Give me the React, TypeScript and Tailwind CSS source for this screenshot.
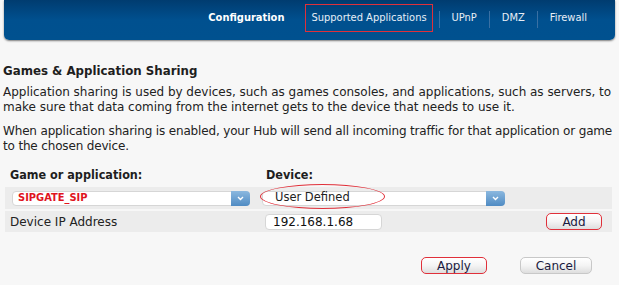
import React from "react";

const cond = { fontFamily: '"DejaVu Sans Condensed", "DejaVu Sans", Tahoma, sans-serif' };
const wide = { fontFamily: '"DejaVu Sans", Tahoma, sans-serif' };

function Sep() {
  return <div className="w-px h-[17px] bg-[#3a70a3] mt-[7px]" />;
}

function Select({ value, red, width }: { value: string; red?: boolean; width: string }) {
  return (
    <div className={`${width} h-[15px] bg-white rounded-[4px] border border-[#d6d6d6] flex items-center relative`}>
      <span className={red ? "pl-[5px] text-[#e0141e] font-bold text-[11px]" : "pl-[12px] text-[#222] text-[11.5px]"} style={red ? cond : wide}>{value}</span>
      <div className="absolute right-[-1px] top-[-1px] h-[15px] w-[19px] rounded-r-[4px] bg-gradient-to-b from-[#8bb8df] to-[#4f8bc3] flex items-center justify-center">
        <svg width="7" height="5" viewBox="0 0 7 5"><path d="M1 1l2.5 2.5L6 1" stroke="#fff" strokeWidth="1.4" fill="none" /></svg>
      </div>
    </div>
  );
}

function Btn({ label, w, ring }: { label: string; w: string; ring?: boolean }) {
  return (
    <div className={`${w} h-[17px] rounded-[5px] border ${ring ? "border-[#e0303a]" : "border-[#c8c8c8]"} bg-gradient-to-b from-white via-[#f4f4f4] to-[#dedede] flex items-center justify-center text-[#1a1a40] text-[12px]`} style={wide}>
      {label}
    </div>
  );
}

export default function App() {
  return (
    <div className="w-[619px] h-[285px] bg-[#f7f7f7] overflow-hidden text-[#222]" style={cond}>
      <div className="mx-[4px] h-[40px] rounded-b-[5px] bg-gradient-to-b from-[#003c70] via-[#00508f] to-[#00518f] shadow-[0_1px_2px_rgba(0,0,0,0.5)] flex justify-end pr-[28px] pt-[4px] text-[11px]">
        <div className="flex items-start h-[28px]">
          <div className="h-[28px] flex items-center font-bold text-white">Configuration</div>
          <div className="ml-[21px] h-[28px] border border-[#e0303a] px-[5px] flex items-center text-[#e8eef6]">Supported Applications</div>
          <div className="ml-[6px]"><Sep /></div>
          <div className="ml-[12px] h-[28px] flex items-center text-[#e8eef6]">UPnP</div>
          <div className="ml-[12px]"><Sep /></div>
          <div className="ml-[12px] h-[28px] flex items-center text-[#e8eef6]">DMZ</div>
          <div className="ml-[12px]"><Sep /></div>
          <div className="ml-[12px] h-[28px] flex items-center text-[#e8eef6]">Firewall</div>
        </div>
      </div>

      <div className="pl-[3px] pt-[24px] text-[12px] whitespace-nowrap" style={wide}>
        <div className="font-bold text-[11.8px] leading-[15px] text-[#1e1e1e]">Games &amp; Application Sharing</div>
        <p className="mt-[6px] leading-[15px] tracking-[-0.02px]">
          Application sharing is used by devices, such as games consoles, and applications, such as servers, to<br />
          make sure that data coming from the internet gets to the device that needs to use it.
        </p>
        <p className="mt-[9px] leading-[15px] tracking-[-0.16px]">
          When application sharing is enabled, your Hub will send all incoming traffic for that application or game<br />
          to the chosen device.
        </p>
      </div>

      <div className="mx-[5px] mt-[13px] w-[607px]">
        <div className="flex font-bold text-[12.5px] text-[#1e1e1e] h-[17px] items-center pl-[5px]">
          <div className="w-[256px]">Game or application:</div>
          <div>Device:</div>
        </div>
        <div className="mt-[3px] h-[22px] bg-[#ececec] flex items-center pl-[7px]">
          <Select value="SIPGATE_SIP" red width="w-[238px]" />
          <div className="relative ml-[12px]">
            <Select value="User Defined" width="w-[243px]" />
            <div className="absolute left-[-2px] top-[-7px] w-[125px] h-[25px] rounded-[50%] border border-[#e0303a]" />
          </div>
        </div>
        <div className="mt-[2px] h-[21px] bg-[#ececec] flex items-center pl-[5px] text-[12px]" style={wide}>
          <div className="w-[255px]">Device IP Address</div>
          <div className="w-[117px] h-[16px] bg-white rounded-[4px] border border-[#d6d6d6] flex items-center pl-[7px] text-[#111]">192.168.1.68</div>
          <div className="flex-1" />
          <div className="mr-[10px]"><Btn label="Add" w="w-[56px]" ring /></div>
        </div>
        <div className="flex justify-end gap-[33px] mt-[25px] pr-[20px]">
          <Btn label="Apply" w="w-[66px]" ring />
          <Btn label="Cancel" w="w-[72px]" />
        </div>
      </div>
    </div>
  );
}
